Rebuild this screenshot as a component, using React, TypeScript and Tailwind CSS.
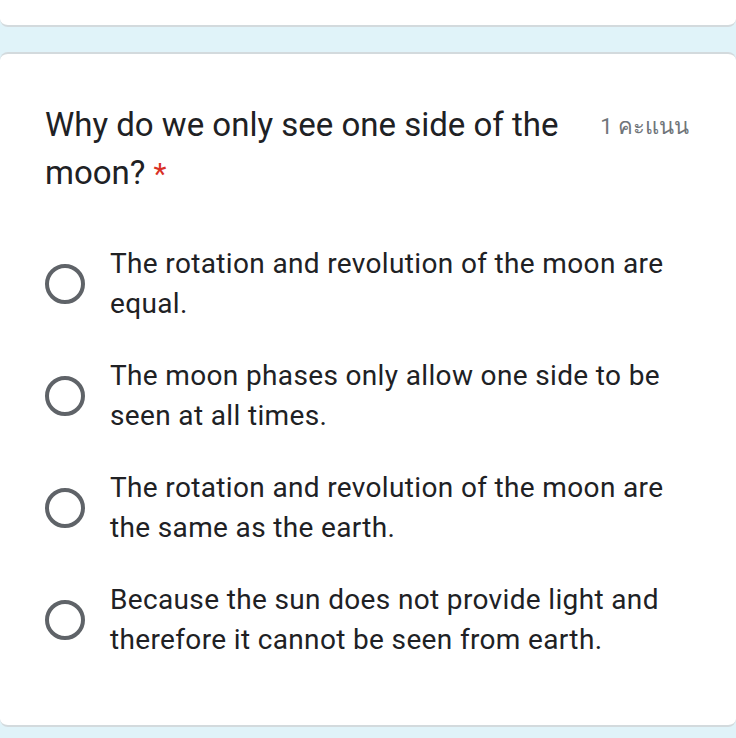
import React from 'react';

const options = [
  'The rotation and revolution of the moon are equal.',
  'The moon phases only allow one side to be seen at all times.',
  'The rotation and revolution of the moon are the same as the earth.',
  'Because the sun does not provide light and therefore it cannot be seen from earth.',
];

const Radio = () => (
  <div className="w-[40px] h-[40px] shrink-0 rounded-full border-[4px] border-[#5f6368]" />
);

export default function App() {
  return (
    <div className="w-[736px] h-[738px] overflow-hidden bg-[#e0f3f9] font-['Roboto',sans-serif]">
      <div className="h-[27px] bg-white rounded-b-[8px] border-b-[2px] border-[#d3dadd]" />

      <div className="mt-[25px] bg-white rounded-[8px] border-t-[2px] border-b-[2px] border-[#d3dadd] pt-[47px] pb-[65px] px-[45px]">
        <div className="flex items-start">
          <h1 className="flex-1 text-[33px] leading-[48px] text-[#202124] font-normal">
            Why do we only see one side of the moon?{' '}
            <span className="text-[#d93025] text-[30px] leading-none">*</span>
          </h1>
          <div className="ml-[40px] mr-[2px] mt-[2px] text-[22px] leading-[48px] text-[#70757a] font-['Roboto','Noto_Sans',sans-serif] whitespace-nowrap">
            1 คะแนน
          </div>
        </div>

        <div className="mt-[47px] flex flex-col gap-[32px]">
          {options.map((o) => (
            <div key={o} className="flex items-center gap-[25px]">
              <Radio />
              <p className="text-[28px] leading-[40px] text-[#202124] tracking-[0.35px] pr-[14px]">{o}</p>
            </div>
          ))}
        </div>
      </div>
    </div>
  );
}
